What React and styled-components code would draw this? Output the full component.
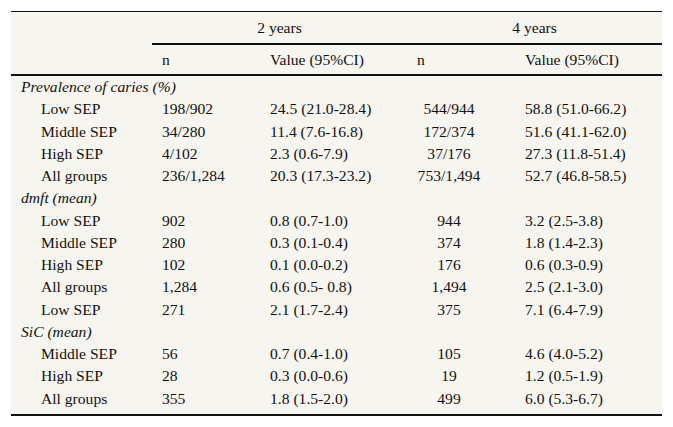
import React from "react";
import styled, { createGlobalStyle } from "styled-components";

const Global = createGlobalStyle`
  html, body { margin: 0; padding: 0; background: #ffffff; }
`;

const Page = styled.div`
  padding: 11px;
`;

const Table = styled.table`
  width: 651px;
  table-layout: fixed;
  border-collapse: collapse;
  background: #f7f5f0;
  font-family: "Liberation Serif", "Times New Roman", serif;
  font-size: 15.6px;
  color: #111111;
  border-top: 1px solid #111111;
  border-bottom: 2px solid #111111;
`;

const GroupHead = styled.th`
  font-weight: normal;
  height: 31px;
  padding: 0;
  text-align: center;
  vertical-align: middle;
  border-bottom: ${(p) => (p.$rule ? "2px solid #111111" : "none")};
`;

const SubHeadRow = styled.tr`
  border-bottom: 2px solid #111111;
`;

const SubHead = styled.th`
  font-weight: normal;
  height: 29px;
  padding: 0 0 0 10px;
  text-align: left;
  vertical-align: middle;
`;

const Row = styled.tr`
  &:last-child td { padding-bottom: 4px; }
`;

const Label = styled.td`
  padding: 0 0 0 ${(p) => (p.$indent ? "30px" : "10px")};
  font-style: ${(p) => (p.$italic ? "italic" : "normal")};
  white-space: nowrap;
  line-height: 22.25px;
`;

const Cell = styled.td`
  padding: ${(p) => (p.$center ? "0 34px 0 10px" : "0 0 0 10px")};
  text-align: ${(p) => (p.$center ? "center" : "left")};
  white-space: nowrap;
  line-height: 22.25px;
`;

const rows = [
  { cat: "Prevalence of caries (%)" },
  { l: "Low SEP", v: ["198/902", "24.5 (21.0-28.4)", "544/944", "58.8 (51.0-66.2)"] },
  { l: "Middle SEP", v: ["34/280", "11.4 (7.6-16.8)", "172/374", "51.6 (41.1-62.0)"] },
  { l: "High SEP", v: ["4/102", "2.3 (0.6-7.9)", "37/176", "27.3 (11.8-51.4)"] },
  { l: "All groups", v: ["236/1,284", "20.3 (17.3-23.2)", "753/1,494", "52.7 (46.8-58.5)"] },
  { cat: "dmft (mean)" },
  { l: "Low SEP", v: ["902", "0.8 (0.7-1.0)", "944", "3.2 (2.5-3.8)"] },
  { l: "Middle SEP", v: ["280", "0.3 (0.1-0.4)", "374", "1.8 (1.4-2.3)"] },
  { l: "High SEP", v: ["102", "0.1 (0.0-0.2)", "176", "0.6 (0.3-0.9)"] },
  { l: "All groups", v: ["1,284", "0.6 (0.5- 0.8)", "1,494", "2.5 (2.1-3.0)"] },
  { l: "Low SEP", v: ["271", "2.1 (1.7-2.4)", "375", "7.1 (6.4-7.9)"] },
  { cat: "SiC (mean)" },
  { l: "Middle SEP", v: ["56", "0.7 (0.4-1.0)", "105", "4.6 (4.0-5.2)"] },
  { l: "High SEP", v: ["28", "0.3 (0.0-0.6)", "19", "1.2 (0.5-1.9)"] },
  { l: "All groups", v: ["355", "1.8 (1.5-2.0)", "499", "6.0 (5.3-6.7)"] },
];

export default function App() {
  return (
    <Page>
      <Global />
      <Table>
        <colgroup>
          <col style={{ width: 141 }} />
          <col style={{ width: 108 }} />
          <col style={{ width: 147 }} />
          <col style={{ width: 108 }} />
          <col style={{ width: 147 }} />
        </colgroup>
        <thead>
          <tr>
            <GroupHead />
            <GroupHead colSpan={2} $rule>2 years</GroupHead>
            <GroupHead colSpan={2} $rule>4 years</GroupHead>
          </tr>
          <SubHeadRow>
            <SubHead />
            <SubHead>n</SubHead>
            <SubHead>Value (95%CI)</SubHead>
            <SubHead>n</SubHead>
            <SubHead>Value (95%CI)</SubHead>
          </SubHeadRow>
        </thead>
        <tbody>
          {rows.map((r, i) =>
            r.cat ? (
              <Row key={i}>
                <Label $italic colSpan={5}>{r.cat}</Label>
              </Row>
            ) : (
              <Row key={i}>
                <Label $indent>{r.l}</Label>
                <Cell>{r.v[0]}</Cell>
                <Cell>{r.v[1]}</Cell>
                <Cell $center>{r.v[2]}</Cell>
                <Cell>{r.v[3]}</Cell>
              </Row>
            )
          )}
        </tbody>
      </Table>
    </Page>
  );
}
